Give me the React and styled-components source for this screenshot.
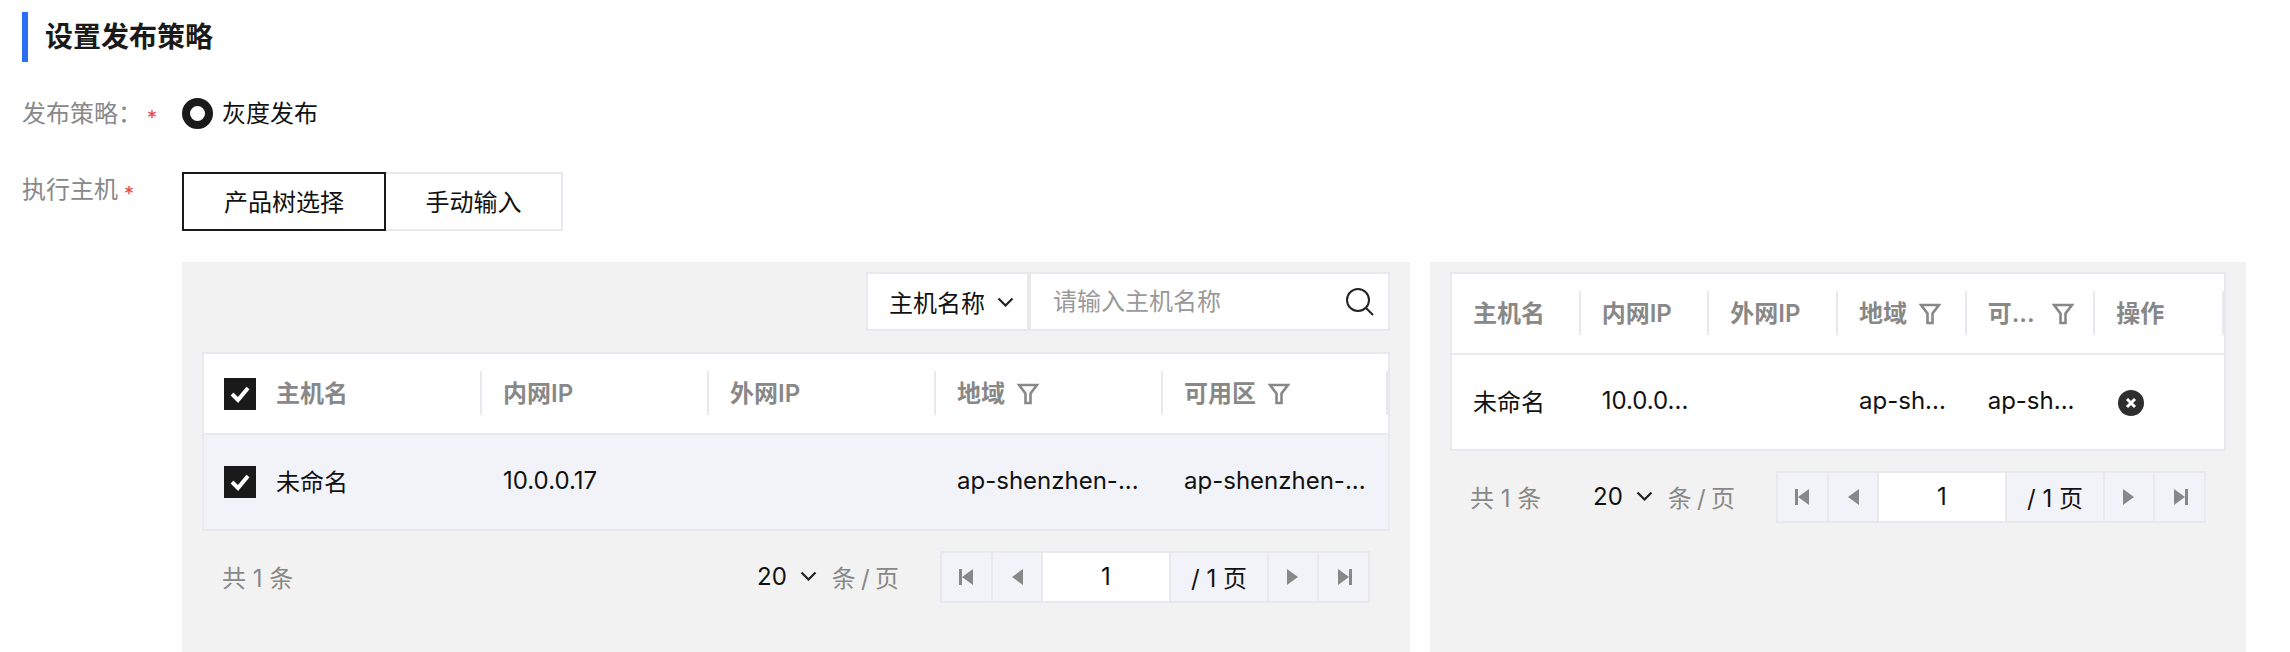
import React from "react";
import styled, { createGlobalStyle } from "styled-components";

const GlobalStyle = createGlobalStyle`
  html, body {
    margin: 0;
    background: #fff;
  }
  body {
    font-family: Inter, "Noto Sans CJK SC", sans-serif;
    font-size: 24px;
    color: #111;
  }
  * {
    box-sizing: border-box;
  }
`;

const Page = styled.div`
  width: 2290px;
  height: 652px;
  overflow: hidden;
  padding: 12px 0 0 22px;
`;

const SectionTitle = styled.h2`
  margin: 0;
  height: 50px;
  padding-left: 17px;
  border-left: 6px solid #2b6ff6;
  font-size: 28px;
  line-height: 50px;
  font-weight: 700;
  color: #1a1a1a;
`;

const FormRow = styled.div`
  display: flex;
  margin-top: ${(p) => p.$top}px;
`;

const Label = styled.div`
  width: 160px;
  height: 31px;
  flex: none;
  color: #888;
  line-height: 32px;
  padding-top: ${(p) => p.$pad || 0}px;
`;

const Required = styled.span`
  margin-left: ${(p) => p.$gap}px;
  color: #e54545;
  font-size: 20px;
  vertical-align: -3px;
`;

const RadioWrap = styled.label`
  display: flex;
  align-items: center;
  gap: 9px;
  height: 31px;
`;

const RadioDot = styled.span`
  width: 31px;
  height: 31px;
  border-radius: 50%;
  border: 8px solid #1a1a1a;
  background: #fff;
`;

const RadioText = styled.span`
  padding-bottom: 5px;
`;

const Tabs = styled.div`
  display: flex;
`;

const Tab = styled.div`
  height: 59px;
  width: ${(p) => p.$width}px;
  display: flex;
  align-items: center;
  justify-content: center;
  padding-bottom: 2px;
  border: 2px solid ${(p) => (p.$active ? "#1a1a1a" : "#e8e8ee")};
  ${(p) => !p.$active && "border-left: none;"}
`;

const Panels = styled.div`
  display: flex;
  gap: 20px;
  margin: 31px 0 0 160px;
`;

const Panel = styled.div`
  width: ${(p) => p.$width}px;
  height: 390px;
  flex: none;
  padding: 10px 20px 0;
  background: #f2f2f2;
`;

const Toolbar = styled.div`
  display: flex;
  justify-content: flex-end;
  height: 59px;
  margin-bottom: 21px;
`;

const SelectBox = styled.div`
  width: 163px;
  display: flex;
  align-items: center;
  gap: 12px;
  padding-left: 21px;
  background: #fff;
  border: 2px solid #e8e8ee;
`;

const SearchBox = styled.div`
  width: 361px;
  display: flex;
  align-items: center;
  padding: 0 13px 0 22px;
  background: #fff;
  border: 2px solid #e8e8ee;
`;

const SearchInput = styled.input`
  flex: 1;
  min-width: 0;
  border: none;
  outline: none;
  padding: 0;
  background: transparent;
  font: inherit;
  &::placeholder {
    color: #999;
    opacity: 1;
  }
`;

const Table = styled.div`
  background: #fff;
  border: 2px solid #e8e8ee;
`;

const Row = styled.div`
  display: grid;
  grid-template-columns: ${(p) => p.$cols};
  height: ${(p) => (p.$head ? 81 : 94)}px;
  background: ${(p) => (p.$selected ? "#f2f3f8" : "#fff")};
  ${(p) => p.$head && "border-bottom: 2px solid #e8e8ee;"}
`;

const Cell = styled.div`
  position: relative;
  min-width: 0;
  display: flex;
  align-items: center;
  padding-left: ${(p) => p.$left || 21}px;
  gap: ${(p) => p.$gap || 0}px;
  white-space: nowrap;
`;

const HeadCell = styled(Cell)`
  color: #888;
  font-weight: 600;
  &::after {
    content: "";
    position: absolute;
    right: 0;
    top: 17px;
    height: 44px;
    width: 2px;
    background: #e8e8ee;
  }
`;

const CellText = styled.span`
  padding-bottom: 4px;
`;

const CheckBox = styled.span`
  width: 32px;
  height: 32px;
  flex: none;
  display: flex;
  align-items: center;
  justify-content: center;
  background: #1a1a1a;
`;

const FilterIcon = styled.svg`
  width: 22px;
  height: 22px;
  flex: none;
  margin-left: ${(p) => p.$gap}px;
`;

const CloseIcon = styled.svg`
  width: 26px;
  height: 26px;
  margin: 2px 0 0 2px;
`;

const Footer = styled.div`
  display: flex;
  align-items: center;
  height: 52px;
  margin-top: 20px;
  padding: 0 20px;
`;

const Total = styled.span`
  color: #888;
  padding-bottom: 2px;
`;

const PageSize = styled.div`
  margin-left: auto;
  display: flex;
  align-items: center;
  gap: 13px;
  padding-bottom: 2px;
`;

const Muted = styled.span`
  color: #888;
  margin: 0 41px 0 15px;
  padding-bottom: 2px;
  word-spacing: -1.5px;
`;

const Pager = styled.div`
  display: flex;
  height: 52px;
  background: #e8e8ee;
  border: 2px solid #e8e8ee;
  gap: 2px;
`;

const PagerBtn = styled.div`
  width: ${(p) => p.$width}px;
  display: flex;
  align-items: center;
  justify-content: center;
  padding-bottom: ${(p) => (p.$text ? 2 : 0)}px;
  background: ${(p) => (p.$white ? "#fff" : "#f2f3f8")};
`;

const Chevron = () => (
  <svg width="17" height="10" viewBox="0 0 17 10">
    <path d="M1.500 1.500 8.500 8.500l7-7" fill="none" stroke="#222" strokeWidth="2.2" />
  </svg>
);

const Funnel = ({ gap = 12 }) => (
  <FilterIcon $gap={gap} viewBox="0 0 22 22">
    <path d="M2 2h18l-6.500 8.500V20h-5v-9.500z" fill="none" stroke="#888" strokeWidth="2.6" />
  </FilterIcon>
);

const Check = () => (
  <svg width="22" height="18" viewBox="0 0 22 18">
    <path d="M3 9l6 6L19 3" fill="none" stroke="#fff" strokeWidth="4" />
  </svg>
);

const Arrow = ({ dir, bar, color }) => (
  <svg width="16" height="16" viewBox="0 0 16 16">
    {dir === "left" ? (
      <path d="M14 0v16L3 8z" fill={color} />
    ) : (
      <path d="M2 0v16l11-8z" fill={color} />
    )}
    {bar && (
      <rect x={dir === "left" ? 0 : 13} y="0" width="3" height="16" fill={color} />
    )}
  </svg>
);

const Pagination = () => (
  <Footer>
    <Total>共 1 条</Total>
    <PageSize>
      <span>20</span>
      <Chevron />
    </PageSize>
    <Muted>条 / 页</Muted>
    <Pager>
      <PagerBtn $width={49}>
        <Arrow dir="left" bar color="#888" />
      </PagerBtn>
      <PagerBtn $width={48}>
        <Arrow dir="left" color="#888" />
      </PagerBtn>
      <PagerBtn $width={126} $white $text>
        1
      </PagerBtn>
      <PagerBtn $width={96} $text>
        / 1 页
      </PagerBtn>
      <PagerBtn $width={48}>
        <Arrow dir="right" color="#888" />
      </PagerBtn>
      <PagerBtn $width={49}>
        <Arrow dir="right" bar color="#888" />
      </PagerBtn>
    </Pager>
  </Footer>
);

const LEFT_COLS = "278px 227px 227px 227px 225px";
const RIGHT_COLS = "repeat(6, 1fr)";

export default function App() {
  return (
    <Page>
      <GlobalStyle />
      <SectionTitle>设置发布策略</SectionTitle>
      <FormRow $top={36}>
        <Label>
          发布策略：
          <Required $gap={5}>*</Required>
        </Label>
        <RadioWrap>
          <RadioDot />
          <RadioText>灰度发布</RadioText>
        </RadioWrap>
      </FormRow>
      <FormRow $top={43}>
        <Label $pad={2}>
          执行主机
          <Required $gap={6}>*</Required>
        </Label>
        <Tabs>
          <Tab $width={204} $active>
            产品树选择
          </Tab>
          <Tab $width={177}>手动输入</Tab>
        </Tabs>
      </FormRow>
      <Panels>
        <Panel $width={1228}>
          <Toolbar>
            <SelectBox>
              主机名称
              <Chevron />
            </SelectBox>
            <SearchBox>
              <SearchInput placeholder="请输入主机名称" />
              <svg width="30" height="30" viewBox="0 0 30 30">
                <circle cx="13" cy="13" r="11" fill="none" stroke="#222" strokeWidth="2" />
                <path d="M21 21l7 7" stroke="#222" strokeWidth="2" />
              </svg>
            </SearchBox>
          </Toolbar>
          <Table>
            <Row $head $cols={LEFT_COLS}>
              <HeadCell $left={20} $gap={20}>
                <CheckBox>
                  <Check />
                </CheckBox>
                <CellText>主机名</CellText>
              </HeadCell>
              <HeadCell>
                <CellText>内网IP</CellText>
              </HeadCell>
              <HeadCell>
                <CellText>外网IP</CellText>
              </HeadCell>
              <HeadCell>
                <CellText>地域</CellText>
                <Funnel />
              </HeadCell>
              <HeadCell>
                <CellText>可用区</CellText>
                <Funnel />
              </HeadCell>
            </Row>
            <Row $selected $cols={LEFT_COLS}>
              <Cell $left={20} $gap={20}>
                <CheckBox>
                  <Check />
                </CheckBox>
                <CellText>未命名</CellText>
              </Cell>
              <Cell>
                <CellText>10.0.0.17</CellText>
              </Cell>
              <Cell />
              <Cell>
                <CellText>ap-shenzhen-...</CellText>
              </Cell>
              <Cell>
                <CellText>ap-shenzhen-...</CellText>
              </Cell>
            </Row>
          </Table>
          <Pagination />
        </Panel>
        <Panel $width={816}>
          <Table>
            <Row $head $cols={RIGHT_COLS}>
              <HeadCell>
                <CellText>主机名</CellText>
              </HeadCell>
              <HeadCell>
                <CellText>内网IP</CellText>
              </HeadCell>
              <HeadCell>
                <CellText>外网IP</CellText>
              </HeadCell>
              <HeadCell>
                <CellText>地域</CellText>
                <Funnel />
              </HeadCell>
              <HeadCell>
                <CellText>可...</CellText>
                <Funnel gap={17} />
              </HeadCell>
              <HeadCell>
                <CellText>操作</CellText>
              </HeadCell>
            </Row>
            <Row $cols={RIGHT_COLS}>
              <Cell>
                <CellText>未命名</CellText>
              </Cell>
              <Cell>
                <CellText>10.0.0...</CellText>
              </Cell>
              <Cell />
              <Cell>
                <CellText>ap-sh...</CellText>
              </Cell>
              <Cell>
                <CellText>ap-sh...</CellText>
              </Cell>
              <Cell>
                <CloseIcon viewBox="0 0 26 26">
                  <circle cx="13" cy="13" r="13" fill="#2e2e2e" />
                  <path d="M9 9l8 8M17 9l-8 8" stroke="#fff" strokeWidth="3" />
                </CloseIcon>
              </Cell>
            </Row>
          </Table>
          <Pagination />
        </Panel>
      </Panels>
    </Page>
  );
}
